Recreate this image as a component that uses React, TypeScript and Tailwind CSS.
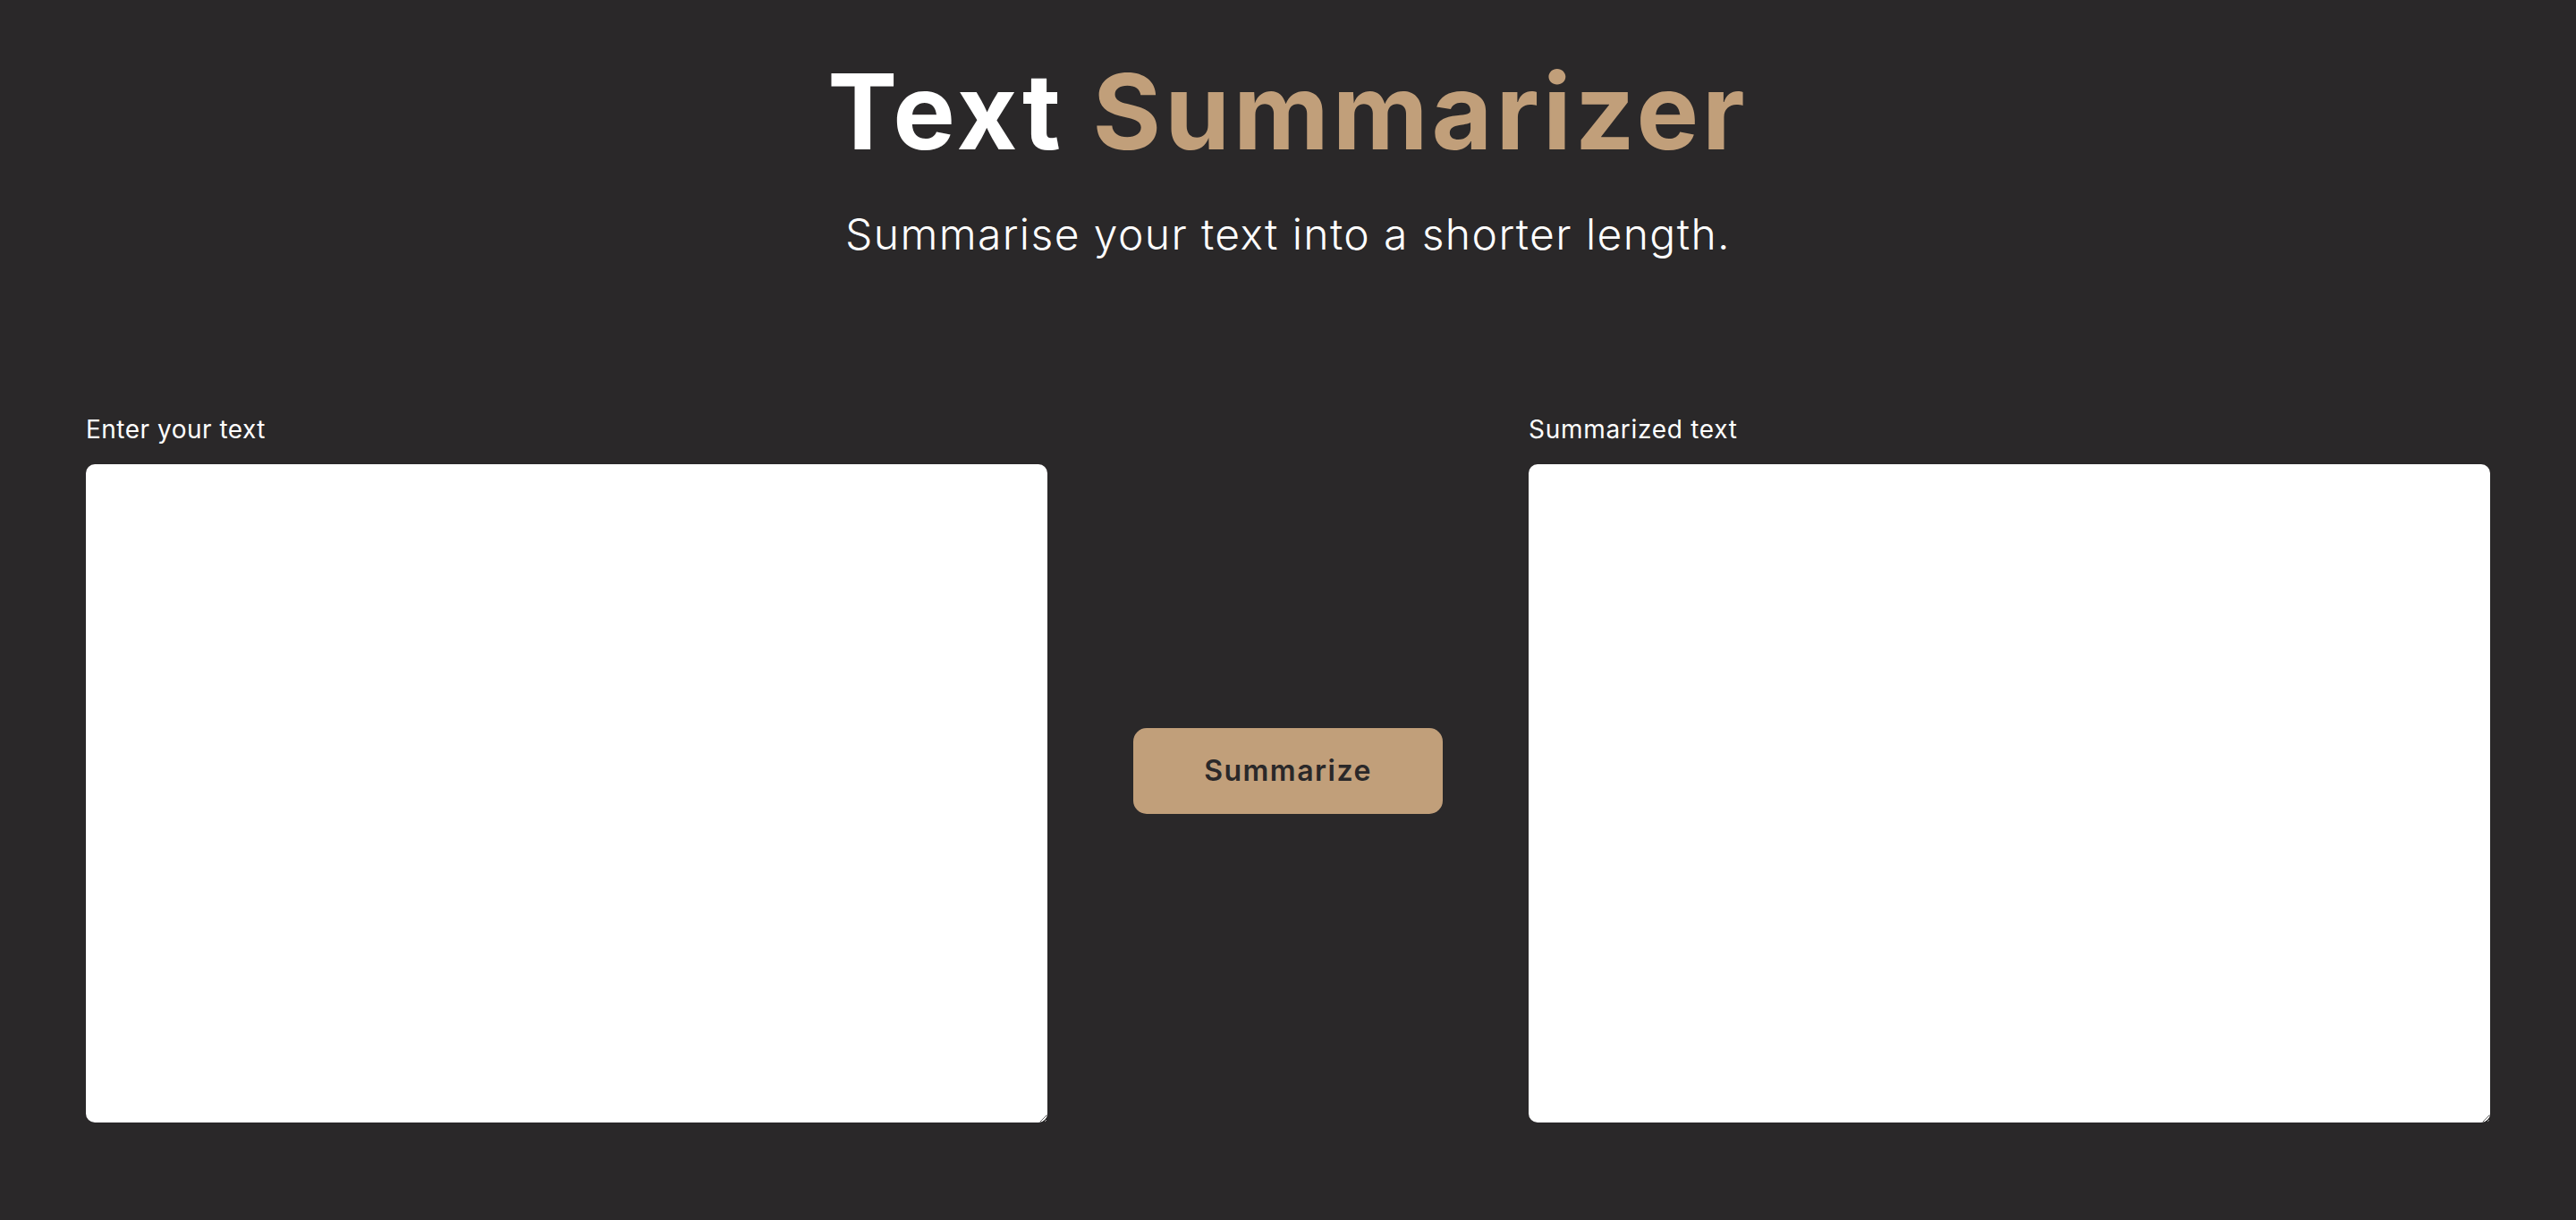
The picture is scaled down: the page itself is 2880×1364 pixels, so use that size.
import React from "react";

export default function App() {
  return (
    <div
      className="min-h-screen w-full bg-[#2a2829] text-white"
      style={{ fontFamily: "Inter, 'Open Sans', sans-serif" }}
    >
      <div className="flex flex-col items-center pt-[66px]">
        <h1 className="text-[117px] leading-none font-bold tracking-[4px]">
          <span className="text-white">Text </span>
          <span className="text-[#c19f7a]">Summarizer</span>
        </h1>
        <p className="mt-[55px] text-[48px] leading-none font-light tracking-[1.4px]">
          Summarise your text into a shorter length.
        </p>
      </div>
      <div className="mt-[180px] flex items-center justify-between px-[96px]">
        <div className="flex w-[1075px] flex-col">
          <label className="text-[28px] leading-none font-normal tracking-[0.5px]">Enter your text</label>
          <textarea className="mt-[25px] h-[736px] w-full rounded-[10px] bg-white text-black outline-none" />
        </div>
        <button className="mt-[3px] flex h-[96px] w-[346px] items-center justify-center rounded-[15px] bg-[#c19f7a] text-[32px] font-semibold tracking-[1.5px] text-[#2a2829]">
          Summarize
        </button>
        <div className="flex w-[1075px] flex-col">
          <label className="text-[28px] leading-none font-normal tracking-[0.7px]">Summarized text</label>
          <textarea className="mt-[25px] h-[736px] w-full rounded-[10px] bg-white text-black outline-none" />
        </div>
      </div>
    </div>
  );
}
